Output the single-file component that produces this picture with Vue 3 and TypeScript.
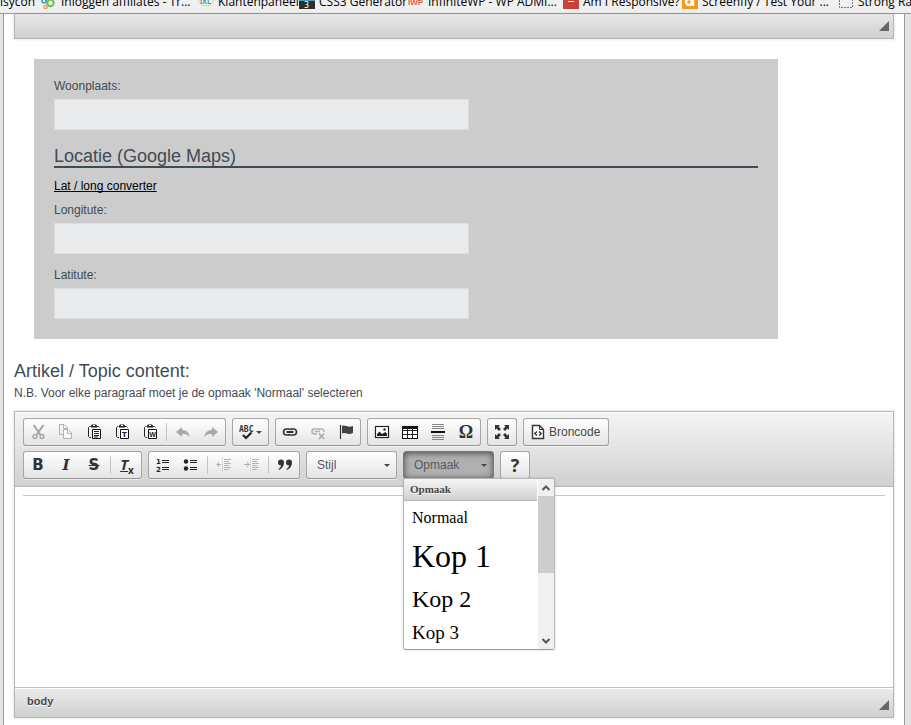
<script setup lang="ts">
import { ref } from 'vue'

interface Tool {
  name: string
  icon?: string
  glyph?: string
  text?: string
  disabled?: boolean
  menu?: boolean
  separator?: boolean
}

const board =
  '<path d="M4.500 2.500H3.500L2.500 3.500V12.500L3.500 13.500H5M11 2.500H12.500L13.500 3.500" fill="none" stroke="#222"/>' +
  '<path d="M5 3.500V1.500L6 .5H10L11 1.500V3.500Z" fill="#222"/><path d="M7 1.500H9" stroke="#fff"/>' +
  '<path d="M6.500 5.500H14.500V14.500H6.500Z" fill="#fff" stroke="#111"/>'

const icons: Record<string, string> = {
  cut:
    '<path d="M3.600 1L10.500 11M13.400 1L6.500 11" stroke="#a9a9a9" stroke-width="2.200"/>' +
    '<circle cx="5" cy="12.500" r="1.900" fill="none" stroke="#a9a9a9" stroke-width="1.500"/>' +
    '<circle cx="12" cy="12.500" r="1.900" fill="none" stroke="#a9a9a9" stroke-width="1.500"/>',
  copy:
    '<path d="M5 10.500H1.500V.5H6L9.500 4V5" fill="none" stroke="#b2b2b2"/><path d="M5.500 .5V4.500H9" fill="none" stroke="#b2b2b2"/>' +
    '<path d="M5.500 5.500H10L13.500 9V14.500H5.500Z" fill="#fafafa" stroke="#b2b2b2"/><path d="M9.500 5.500V9.500H13.500" fill="none" stroke="#b2b2b2"/>',
  paste: board + '<path d="M8 7.500H13M8 9.500H13M8 11.500H13M8 13H12" stroke="#222"/>',
  pasteText:
    board + '<text x="10.500" y="12.500" text-anchor="middle" font-family="DejaVu Sans" font-size="7" font-weight="bold" fill="#222">T</text>',
  pasteWord:
    board + '<text x="10.500" y="12.500" text-anchor="middle" font-family="Liberation Sans" font-size="7" font-weight="bold" fill="#222">W</text>',
  undo: '<path d="M1 8L7 3V6C11 6 14 8.500 15 13C12.500 10.500 10.500 10 7 10V13Z" fill="#a9a9a9"/>',
  redo: '<path d="M15 8L9 3V6C5 6 2 8.500 1 13C3.500 10.500 5.500 10 9 10V13Z" fill="#a9a9a9"/>',
  spell:
    '<text x="0" y="8" font-family="DejaVu Sans Mono" font-size="8" font-weight="bold" fill="#333">ABC</text>' +
    '<path d="M4 11L7 14L12.500 8.500" fill="none" stroke="#222" stroke-width="2.200"/>',
  link:
    '<path d="M7 11H4.500A3 3 0 0 1 4.500 5H7.500Q9.500 5 9.800 6M9 5H11.500A3 3 0 0 1 11.500 11H8.500Q6.500 11 6.200 10" fill="none" stroke="#333" stroke-width="1.600"/>' +
    '<path d="M4.500 8H11.500" stroke="#333" stroke-width="2"/>',
  unlink:
    '<path d="M7 10H4.500A2.500 2.500 0 0 1 4.500 5H7.500Q9.500 5 9.800 6M9 5H11.500A2.500 2.500 0 0 1 14 8" fill="none" stroke="#b2b2b2" stroke-width="1.500"/>' +
    '<path d="M4.500 7.500H10" stroke="#b2b2b2" stroke-width="1.500"/><path d="M9 9.500L14 15M14 9.500L9 15" stroke="#aaa" stroke-width="1.600"/>',
  flag:
    '<path d="M2.500 1V15" stroke="#333" stroke-width="1.200"/><path d="M4 2C7 .5 9 4 15 2V9C10 11.500 8 8 4 9.500Z" fill="#444"/>',
  image:
    '<rect x="1.500" y="2.500" width="13" height="11" fill="#fff" stroke="#222" stroke-width="1.200"/>' +
    '<path d="M3 12V10L5.500 7.500L8 10L11.500 8L13 10V12Z" fill="#222"/><circle cx="10.500" cy="5.500" r="1.200" fill="#222"/>',
  table:
    '<rect x=".5" y="2.500" width="15" height="12" fill="#fff" stroke="#111"/>' +
    '<path d="M0 3.500H16" stroke="#111" stroke-width="3"/><path d="M5.500 3V14M10.500 3V14M0 6.500H16M0 10.500H16" stroke="#222"/>',
  rule:
    '<path d="M2 .5H14M2 2.500H14M2 4.500H14M2 11.500H14M2 13.500H14M2 15.500H14" stroke="#888"/><path d="M1 8H15" stroke="#111" stroke-width="2"/>',
  maximize:
    '<path d="M1 1H6L4.500 2.500L7 5L5 7L2.500 4.500L1 6ZM15 1V6L13.500 4.500L11 7L9 5L11.500 2.500L10 1ZM1 15V10L2.500 11.500L5 9L7 11L4.500 13.500L6 15ZM15 15H10L11.500 13.500L9 11L11 9L13.500 11.500L15 10Z" fill="#333"/>',
  source:
    '<path d="M2.500 1.500H9.500L13.500 5.500V14.500H2.500Z" fill="#fff" stroke="#333" stroke-width="1.400"/><path d="M9.500 1.500V5.500H13.500" fill="none" stroke="#333"/>' +
    '<path d="M7 7.500L4.800 9.500L7 11.500M9 7.500L11.200 9.500L9 11.500" fill="none" stroke="#333" stroke-width="1.400"/>',
  ordered:
    '<text x="1" y="7" font-family="DejaVu Sans" font-size="7" font-weight="bold" fill="#222">1</text>' +
    '<text x="1" y="15" font-family="DejaVu Sans" font-size="7" font-weight="bold" fill="#222">2</text>' +
    '<path d="M7 3.500H14M7 5.500H14M7 10.500H14M7 12.500H14" stroke="#222"/>',
  bullets:
    '<circle cx="3" cy="4.500" r="2.200" fill="#222"/><circle cx="3" cy="11.500" r="2.200" fill="#222"/><path d="M7 3.500H14M7 5.500H14M7 10.500H14M7 12.500H14" stroke="#222"/>',
  outdent:
    '<path d="M8 2.500H15M8 4.500H13M8 6.500H15M8 8.500H13M8 10.500H15M8 12.500H13" stroke="#b2b2b2"/><path d="M6.500 1V15" stroke="#bbb" stroke-dasharray="1 1"/><path d="M1 7.500H5M3 5L1 7.500L3 10" fill="none" stroke="#aaa"/>',
  indent:
    '<path d="M8 2.500H15M8 4.500H13M8 6.500H15M8 8.500H13M8 10.500H15M8 12.500H13" stroke="#b2b2b2"/><path d="M6.500 1V15" stroke="#bbb" stroke-dasharray="1 1"/><path d="M0 7.500H5M3 5L5 7.500L3 10" fill="none" stroke="#aaa"/>',
  quote:
    '<path d="M1 5.500A2.900 2.900 0 0 1 7 5.500C7 9 5 11.500 2 13L1.500 12C3 11 4 10 4 8.300A2.800 2.800 0 0 1 1 5.500ZM9 5.500A2.900 2.900 0 0 1 15 5.500C15 9 13 11.500 10 13L9.500 12C11 11 12 10 12 8.300A2.800 2.800 0 0 1 9 5.500Z" fill="#333"/>',
}

const rowOne: Tool[][] = [
  [
    { name: 'Knippen', icon: 'cut', disabled: true },
    { name: 'Kopiëren', icon: 'copy', disabled: true },
    { name: 'Plakken', icon: 'paste' },
    { name: 'Plakken als platte tekst', icon: 'pasteText' },
    { name: 'Plakken vanuit Word', icon: 'pasteWord' },
    { name: 'Ongedaan maken', icon: 'undo', disabled: true, separator: true },
    { name: 'Opnieuw uitvoeren', icon: 'redo', disabled: true },
  ],
  [{ name: 'Spellingscontrole', icon: 'spell', menu: true }],
  [
    { name: 'Link invoegen', icon: 'link' },
    { name: 'Link verwijderen', icon: 'unlink', disabled: true },
    { name: 'Interne link', icon: 'flag' },
  ],
  [
    { name: 'Afbeelding', icon: 'image' },
    { name: 'Tabel', icon: 'table' },
    { name: 'Horizontale lijn', icon: 'rule' },
    { name: 'Speciaal teken', glyph: 'omega', text: 'Ω' },
  ],
  [{ name: 'Maximaliseren', icon: 'maximize' }],
]

const rowTwo: Tool[][] = [
  [
    { name: 'Vet', glyph: 'bold', text: 'B' },
    { name: 'Cursief', glyph: 'italic', text: 'I' },
    { name: 'Doorhalen', glyph: 'strike', text: 'S' },
    { name: 'Opmaak verwijderen', glyph: 'clear', text: 'T', separator: true },
  ],
  [
    { name: 'Genummerde lijst', icon: 'ordered' },
    { name: 'Opsomming', icon: 'bullets' },
    { name: 'Inspringing verkleinen', icon: 'outdent', disabled: true, separator: true },
    { name: 'Inspringing vergroten', icon: 'indent', disabled: true },
    { name: 'Citaatblok', icon: 'quote', separator: true },
  ],
]

const toolRows = [rowOne, rowTwo]

const formats = [
  { label: 'Normaal', kind: 'normal' },
  { label: 'Kop 1', kind: 'h1' },
  { label: 'Kop 2', kind: 'h2' },
  { label: 'Kop 3', kind: 'h3' },
]

const bookmarks = [
  {
    label: 'Inloggen affiliates - Tr...',
    icon: '<circle cx="9.500" cy="5" r="3.200" fill="none" stroke="#6cbf45" stroke-width="2"/><circle cx="3" cy="3" r="2" fill="none" stroke="#3c9dc4" stroke-width="1.600"/><circle cx="4.500" cy="9" r="1.600" fill="none" stroke="#f0995a" stroke-width="1.400"/>',
  },
  {
    label: 'Klantenpaneel',
    icon: '<circle cx="8" cy="0" r="8" fill="#f3f5ec" stroke="#cdd79a"/><text x="2" y="6" font-family="Open Sans" font-size="7" font-weight="bold" fill="#5b83ad">IXL</text>',
  },
  {
    label: 'CSS3 Generator',
    icon: '<rect width="16" height="11" fill="#2f2f2a"/><rect width="16" height="3" fill="#3a9fca"/><text x="5" y="10" font-family="DejaVu Sans" font-size="8" fill="#fff">3</text>',
  },
  {
    label: 'InfiniteWP - WP ADMI...',
    icon: '<text x="0" y="7" font-family="Liberation Sans" font-size="8" font-weight="bold" fill="#e8604c">IWP</text>',
  },
  {
    label: 'Am I Responsive?',
    icon: '<rect width="16" height="11" fill="#cb4138"/><path d="M5 3.500H11" stroke="#fff"/>',
  },
  {
    label: 'Screenfly / Test Your ...',
    icon: '<rect width="16" height="11" fill="#f39a1e"/><circle cx="7" cy="4" r="3" fill="none" stroke="#fff" stroke-width="2.400"/><path d="M11 0V8" stroke="#fff" stroke-width="2.400"/>',
  },
  {
    label: 'Strong Ra',
    icon: '<path d="M1.500 2V9.500H14.500V2" fill="none" stroke="#777" stroke-dasharray="2 1"/>',
  },
]

const place = ref('')
const longitude = ref('')
const latitude = ref('')
const format = ref('Opmaak')
const panelOpen = ref(true)

function pick(): void {
  panelOpen.value = false
}
</script>

<template>
  <div class="window">
    <nav class="bookmarks">
      <a href="#" class="bookmark lead"><span>alisycon</span></a>
      <a v-for="b in bookmarks" :key="b.label" href="#" class="bookmark">
        <svg class="favicon" viewBox="0 0 16 11" v-html="b.icon"></svg>
        <span>{{ b.label }}</span>
      </a>
    </nav>

    <main class="page">
      <div class="editor-end bottom-bar">
        <span></span>
        <svg class="resizer" viewBox="0 0 10 10"><path d="M10 0V10H0Z" /></svg>
      </div>

      <form class="details" @submit.prevent>
        <label for="place">Woonplaats:</label>
        <input id="place" v-model="place" type="text" />
        <h2>Locatie (Google Maps)</h2>
        <a class="converter" href="#">Lat / long converter</a>
        <label for="longitude">Longitute:</label>
        <input id="longitude" v-model="longitude" type="text" />
        <label for="latitude" class="next">Latitute:</label>
        <input id="latitude" v-model="latitude" type="text" />
      </form>

      <h2 class="topic">Artikel / Topic content:</h2>
      <p class="note">N.B. Voor elke paragraaf moet je de opmaak 'Normaal' selecteren</p>

      <section class="editor">
        <div class="toolbar">
          <div v-for="(row, r) in toolRows" :key="r" class="tool-row">
            <div v-for="(group, g) in row" :key="g" class="group">
              <template v-for="tool in group" :key="tool.name">
                <i v-if="tool.separator" class="separator"></i>
                <button type="button" class="tool" :disabled="tool.disabled" :aria-label="tool.name">
                  <svg v-if="tool.icon" class="icon" viewBox="0 0 16 16" v-html="icons[tool.icon]"></svg>
                  <span v-else class="glyph" :class="tool.glyph">{{ tool.text }}<sub v-if="tool.glyph === 'clear'">x</sub></span>
                  <i v-if="tool.menu" class="arrow"></i>
                </button>
              </template>
            </div>

            <div v-if="r === 0" class="group">
              <button type="button" class="tool labelled">
                <svg class="icon" viewBox="0 0 16 16" v-html="icons.source"></svg>
                <span>Broncode</span>
              </button>
            </div>

            <template v-else>
              <div class="combo">
                <select aria-label="Stijl">
                  <option>Stijl</option>
                </select>
                <i class="arrow"></i>
              </div>
              <div class="combo open">
                <select v-model="format" aria-label="Opmaak" @mousedown.prevent="panelOpen = !panelOpen">
                  <option>Opmaak</option>
                </select>
                <i class="arrow"></i>
                <div v-if="panelOpen" class="panel">
                  <div class="panel-body">
                    <h3>Opmaak</h3>
                    <ul>
                      <li v-for="f in formats" :key="f.label">
                        <button type="button" :class="f.kind" @click="pick">{{ f.label }}</button>
                      </li>
                    </ul>
                  </div>
                  <div class="scrollbar">
                    <svg viewBox="0 0 15 17"><path d="M4 11L7.500 7.500L11 11" /></svg>
                    <i class="thumb"></i>
                    <svg viewBox="0 0 15 17"><path d="M4 7L7.500 10.500L11 7" /></svg>
                  </div>
                </div>
              </div>
              <div class="group">
                <button type="button" class="tool" aria-label="Help"><span class="glyph help">?</span></button>
              </div>
            </template>
          </div>
        </div>

        <div class="content"><hr /></div>

        <div class="bottom-bar">
          <a href="#">body</a>
          <svg class="resizer" viewBox="0 0 10 10"><path d="M10 0V10H0Z" /></svg>
        </div>
      </section>
    </main>
  </div>
</template>

<style>
body {
  margin: 0;
  background: #e4e4e4;
}
</style>

<style scoped>
* {
  box-sizing: border-box;
}

.window {
  height: 100vh;
  overflow: hidden;
  font: 12px/14px 'Liberation Sans', Arial, sans-serif;
  color: #3f4b56;
}

.bookmarks {
  display: grid;
  grid-template-rows: 13px;
  grid-template-columns: 41px 157px 101px 109px 155px 119px 156px 1fr;
  align-items: end;
  height: 14px;
  overflow: hidden;
  background: #f0f0f0;
  border-bottom: 1px solid #999;
}

.bookmark {
  display: flex;
  align-items: flex-end;
  gap: 4px;
  padding-bottom: 3px;
  font: 12px/16px 'Open Sans', 'Noto Sans', sans-serif;
  color: #000;
  text-decoration: none;
  white-space: nowrap;
}

.lead {
  justify-content: flex-end;
  padding-right: 6px;
}

.favicon {
  flex: none;
  width: 16px;
  height: 11px;
  margin-bottom: 1px;
}

.page {
  min-height: calc(100vh - 14px);
  margin: 0 6px 0 3px;
  padding: 0 10px;
  background: #fff;
  border: solid #999;
  border-width: 0 1px;
}

.bottom-bar {
  display: flex;
  align-items: center;
  justify-content: space-between;
  height: 30px;
  padding: 0 4px 3px 12px;
  background: linear-gradient(#ebebeb, #cfd1cf);
  border-top: 1px solid #bfbfbf;
  box-shadow: inset 0 1px 0 #fff;
}

.bottom-bar a {
  font-size: 11px;
  font-weight: bold;
  color: #484848;
  text-decoration: none;
  text-shadow: 0 1px 0 #fff;
}

.resizer {
  align-self: flex-end;
  width: 10px;
  height: 10px;
  margin-bottom: 4px;
  fill: #666;
}

.editor-end {
  height: 25px;
  background: linear-gradient(#e6e6e6, #cfd1cf);
  border: solid #b6b6b6;
  border-width: 0 1px 1px;
  box-shadow: 0 0 3px rgba(0, 0, 0, 0.15);
}

.details {
  display: flex;
  flex-direction: column;
  align-items: flex-start;
  margin: 20px 116px 22px 20px;
  padding: 20px;
  background: #ccc;
}

.details input {
  width: 415px;
  max-width: 100%;
  height: 31px;
  margin-top: 6px;
  padding: 0 8px;
  background: #e9eaeb;
  border: 1px solid #dcddde;
  font: inherit;
  outline: none;
}

.details .next {
  margin-top: 14px;
}

h2 {
  margin: 0;
  font-size: 18px;
  font-weight: normal;
  line-height: 20px;
}

.details h2 {
  align-self: stretch;
  margin: 16px 0 11px;
  border-bottom: 2px solid #3f4b56;
}

.converter {
  margin-bottom: 10px;
  color: #000;
  text-decoration-skip-ink: none;
}

.note {
  margin: 5px 0 11px;
}

.editor {
  border: 1px solid #b6b6b6;
  box-shadow: 0 0 3px rgba(0, 0, 0, 0.15);
}

.toolbar {
  padding: 6px 8px 2px;
  background: linear-gradient(#f5f5f5, #cfd1cf);
  border-bottom: 1px solid #b6b6b6;
  box-shadow: inset 0 1px 0 #fff;
}

.tool-row {
  display: flex;
  gap: 6px;
  margin-bottom: 5px;
}

.group,
.combo {
  display: flex;
  height: 28px;
  background: linear-gradient(#fff, #e4e4e4);
  border: 1px solid #a6a6a6;
  border-bottom-color: #979797;
  border-radius: 3px;
  box-shadow: 0 1px 0 rgba(255, 255, 255, 0.5);
}

.tool {
  display: flex;
  align-items: center;
  min-width: 28px;
  height: 26px;
  padding: 0 6px;
  background: none;
  border: 0;
  font: inherit;
  color: #484848;
}

.labelled {
  gap: 3px;
  padding-right: 8px;
}

.icon {
  flex: none;
  width: 16px;
  height: 16px;
}

.separator {
  width: 1px;
  height: 18px;
  margin: 4px 2px;
  background: #c4c4c4;
}

.arrow {
  width: 0;
  border: solid transparent;
  border-width: 3px 3px 0;
  border-top-color: #474747;
}

.tool .arrow {
  margin-left: 1px;
}

.glyph {
  width: 16px;
  font: bold 16px/16px 'Open Sans', sans-serif;
  text-align: center;
  color: #333;
}

.bold,
.strike {
  font-family: 'DejaVu Sans', sans-serif;
  font-size: 15px;
}

.italic {
  font-family: 'DejaVu Serif', serif;
  font-size: 15px;
  font-style: italic;
}

.strike {
  text-decoration: line-through;
}

.clear {
  font-size: 15px;
  font-style: italic;
  text-decoration: underline;
  white-space: nowrap;
}

.clear sub {
  display: inline-block;
  font-size: 10px;
  font-style: normal;
  line-height: 8px;
}

.omega {
  font-size: 18px;
  font-family: 'Liberation Serif', serif;
}

.help {
  font-size: 18px;
}

.combo {
  position: relative;
  align-items: center;
  width: 91px;
}

.combo select {
  width: 100%;
  height: 100%;
  padding: 0 20px 0 10px;
  appearance: none;
  background: none;
  border: 0;
  font: inherit;
  color: #535a5d;
  outline: none;
}

.combo > .arrow {
  position: absolute;
  right: 6px;
}

.open {
  background: #b0b0b0;
  border-color: #777;
  box-shadow: inset 0 1px 6px rgba(0, 0, 0, 0.6), 0 1px 0 rgba(255, 255, 255, 0.5);
}

.panel {
  position: absolute;
  z-index: 2;
  top: 26px;
  left: -1px;
  display: flex;
  width: 152px;
  height: 172px;
  overflow: hidden;
  background: #fff;
  border: 1px solid #b6b6b6;
  border-bottom-color: #999;
  border-radius: 3px;
  box-shadow: 0 0 3px rgba(0, 0, 0, 0.15);
}

.panel-body {
  flex: 1;
}

.panel h3 {
  height: 22px;
  margin: 0;
  padding: 0 6px;
  background: linear-gradient(#f5f5f5, #cfd1cf);
  border-bottom: 1px solid #b6b6b6;
  font: bold 11px/21px 'Liberation Serif', 'Times New Roman', serif;
  color: #474747;
  text-shadow: 0 1px 0 rgba(255, 255, 255, 0.75);
}

.panel ul {
  display: flex;
  flex-direction: column;
  gap: 11px;
  margin: 0;
  padding: 8px;
  list-style: none;
}

.panel li {
  display: flex;
}

.panel li button {
  padding: 0;
  background: none;
  border: 0;
  font: 16px/18px 'Liberation Serif', 'Times New Roman', serif;
  color: #000;
}

.panel li .h1 {
  font-size: 32px;
  line-height: 37px;
}

.panel li .h2 {
  font-size: 24px;
  line-height: 27px;
}

.panel li .h3 {
  font-size: 19px;
}

.scrollbar {
  display: flex;
  flex-direction: column;
  width: 16px;
  margin-left: 1px;
  background: #f0f0f0;
}

.scrollbar svg {
  height: 17px;
  fill: none;
  stroke: #555;
  stroke-width: 2px;
}

.thumb {
  height: 77px;
  margin-bottom: auto;
  background: #cdcdcd;
}

.content {
  height: 200px;
  padding: 8px;
}

.content hr {
  margin: 0;
  border: 0;
  border-top: 1px solid #c8c8c8;
}
</style>
